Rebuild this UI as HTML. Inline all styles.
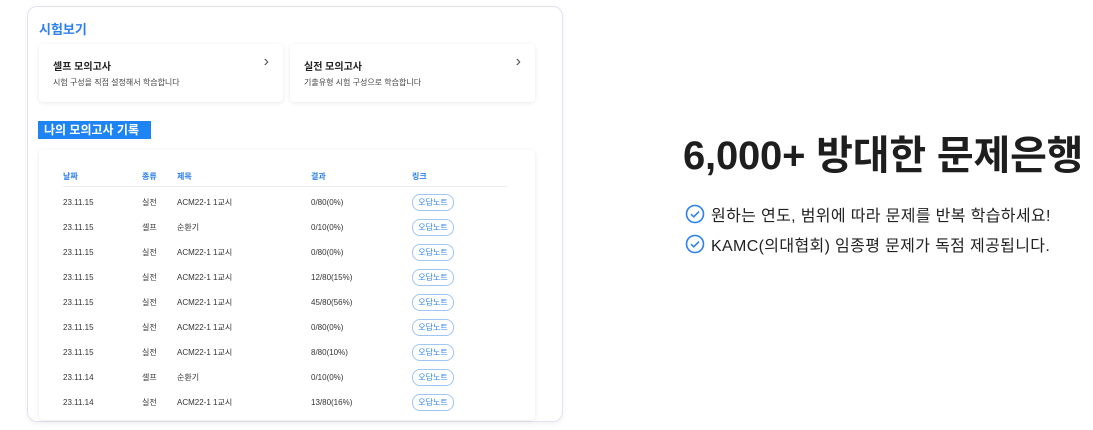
<!DOCTYPE html>
<html><head><meta charset="utf-8"><style>
*{margin:0;padding:0;box-sizing:border-box}
body{width:1093px;height:430px;background:#fff;font-family:"Liberation Sans","Noto Sans CJK KR",sans-serif;position:relative;overflow:hidden;color:#222}
.outer{position:absolute;left:27px;top:6px;width:536px;height:416px;border:1px solid #e2e2f0;border-radius:10px;box-shadow:0 2px 6px rgba(0,0,0,.05);background:#fff}
.t1{position:absolute;left:39px;top:19px;font-size:13px;font-weight:bold;color:#2b80ee}
.card{position:absolute;top:44px;height:58px;background:#fff;border-radius:4px;box-shadow:0 1px 4px rgba(0,0,0,.09)}
.card b{position:absolute;left:14px;top:14px;font-size:10px;color:#222}
.card span{position:absolute;left:14px;top:33px;font-size:8px;color:#444}
.card i{position:absolute;right:14px;top:9px;font-style:normal;font-size:16px;color:#555}
.lab{position:absolute;left:38px;top:121px;width:113px;height:18px;background:#1f84f3;color:#fff;font-size:12px;font-weight:bold;padding-left:6px;line-height:18px}
.tbl{position:absolute;left:39px;top:150px;width:496px;height:270px;background:#fff;border-radius:4px;box-shadow:0 1px 4px rgba(0,0,0,.09);overflow:hidden}
.r{position:absolute;left:0;width:496px;font-size:8px;color:#333;height:14px;line-height:14px}
.r span{position:absolute}
.h{color:#2b80ee;font-weight:bold}
.line{position:absolute;left:24px;top:36px;width:444px;height:1px;background:#eee}
.bd{position:absolute;left:373px;top:-2px;width:42px;height:17px;border:1px solid #9fc6f5;border-radius:8px;color:#2b80ee;text-align:center;line-height:15px;font-size:8px}
h1{position:absolute;left:683px;top:123px;font-size:40px;font-weight:bold;color:#1e1e1e;letter-spacing:-0.2px}
.li{position:absolute;left:685px;font-size:16px;letter-spacing:0.35px;color:#222;display:flex;align-items:center}
.li svg{margin-right:6px}
</style></head><body>
<div class="outer"></div>
<div class="t1">시험보기</div>
<div class="card" style="left:39px;width:244px"><b>셀프 모의고사</b><span>시험 구성을 직접 설정해서 학습합니다</span><i>›</i></div>
<div class="card" style="left:290px;width:245px"><b>실전 모의고사</b><span>기출유형 시험 구성으로 학습합니다</span><i>›</i></div>
<div class="lab">나의 모의고사 기록</div>
<div class="tbl">
<div class="r h" style="top:20px"><span style="left:24px">날짜</span><span style="left:103px">종류</span><span style="left:138px">제목</span><span style="left:272px">결과</span><span style="left:373px">링크</span></div>
<div class="line"></div>
<div class="r" style="top:46px"><span style="left:24px">23.11.15</span><span style="left:103px">실전</span><span style="left:138px">ACM22-1 1교시</span><span style="left:272px">0/80(0%)</span><span class="bd">오답노트</span></div>
<div class="r" style="top:71px"><span style="left:24px">23.11.15</span><span style="left:103px">셀프</span><span style="left:138px">순환기</span><span style="left:272px">0/10(0%)</span><span class="bd">오답노트</span></div>
<div class="r" style="top:96px"><span style="left:24px">23.11.15</span><span style="left:103px">실전</span><span style="left:138px">ACM22-1 1교시</span><span style="left:272px">0/80(0%)</span><span class="bd">오답노트</span></div>
<div class="r" style="top:121px"><span style="left:24px">23.11.15</span><span style="left:103px">실전</span><span style="left:138px">ACM22-1 1교시</span><span style="left:272px">12/80(15%)</span><span class="bd">오답노트</span></div>
<div class="r" style="top:146px"><span style="left:24px">23.11.15</span><span style="left:103px">실전</span><span style="left:138px">ACM22-1 1교시</span><span style="left:272px">45/80(56%)</span><span class="bd">오답노트</span></div>
<div class="r" style="top:171px"><span style="left:24px">23.11.15</span><span style="left:103px">실전</span><span style="left:138px">ACM22-1 1교시</span><span style="left:272px">0/80(0%)</span><span class="bd">오답노트</span></div>
<div class="r" style="top:196px"><span style="left:24px">23.11.15</span><span style="left:103px">실전</span><span style="left:138px">ACM22-1 1교시</span><span style="left:272px">8/80(10%)</span><span class="bd">오답노트</span></div>
<div class="r" style="top:221px"><span style="left:24px">23.11.14</span><span style="left:103px">셀프</span><span style="left:138px">순환기</span><span style="left:272px">0/10(0%)</span><span class="bd">오답노트</span></div>
<div class="r" style="top:246px"><span style="left:24px">23.11.14</span><span style="left:103px">실전</span><span style="left:138px">ACM22-1 1교시</span><span style="left:272px">13/80(16%)</span><span class="bd">오답노트</span></div>
</div>
<h1>6,000+ 방대한 문제은행</h1>
<div class="li" style="top:202px"><svg width="20" height="20" viewBox="0 0 20 20"><circle cx="10" cy="10" r="8.5" fill="none" stroke="#2b80ee" stroke-width="1.6"/><path d="M6 10.2l2.8 2.6L14 7.6" fill="none" stroke="#2b80ee" stroke-width="1.6"/></svg>원하는 연도, 범위에 따라 문제를 반복 학습하세요!</div>
<div class="li" style="top:232px"><svg width="20" height="20" viewBox="0 0 20 20"><circle cx="10" cy="10" r="8.5" fill="none" stroke="#2b80ee" stroke-width="1.6"/><path d="M6 10.2l2.8 2.6L14 7.6" fill="none" stroke="#2b80ee" stroke-width="1.6"/></svg>KAMC(의대협회) 임종평 문제가 독점 제공됩니다.</div>
</body></html>
